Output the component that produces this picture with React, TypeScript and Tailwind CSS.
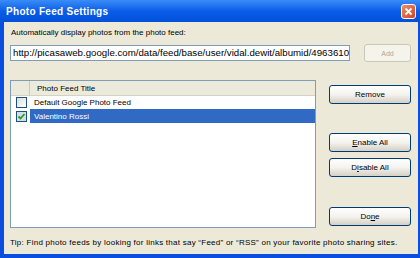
import React from "react";

const font = { fontFamily: '"Liberation Sans", Arial, sans-serif' };

function XpButton({ children }: { children: React.ReactNode }) {
  return (
    <div className="h-[19px] w-[82px] flex items-center justify-center rounded-[3px] border border-[#003c74] bg-gradient-to-b from-[#ffffff] via-[#f4f3ee] to-[#d6d0c5] text-black text-[8px] leading-none">
      {children}
    </div>
  );
}

function Check({ checked, selected }: { checked?: boolean; selected?: boolean }) {
  return (
    <div
      className={
        "w-[11px] h-[11px] border border-[#1c5180] flex items-center justify-center " +
        (selected ? "bg-[#d4dde8]" : "bg-gradient-to-br from-[#dcdcd7] to-[#ffffff]")
      }
    >
      {checked && (
        <svg width="9" height="9" viewBox="0 0 9 9">
          <path d="M1.5 4.5 L3.5 6.5 L7.5 2" stroke="#21a121" strokeWidth="1.8" fill="none" />
        </svg>
      )}
    </div>
  );
}

export default function App() {
  return (
    <div className="w-[420px] h-[258px] flex flex-col bg-[#0a4ee0] overflow-hidden" style={font}>
      {/* title bar */}
      <div className="h-[22px] flex items-center justify-between pl-[6px] pr-[4px] bg-gradient-to-b from-[#3a8cf7] via-[#0a5de8] to-[#0350d8]">
        <span className="text-white font-bold text-[10px] tracking-[0.3px]">Photo Feed Settings</span>
        <div className="w-[15px] h-[15px] mt-[1px] rounded-[3px] border border-white bg-gradient-to-br from-[#f08b68] to-[#d2411b] flex items-center justify-center">
          <svg width="9" height="9" viewBox="0 0 9 9">
            <path d="M1.5 1.5 L7.5 7.5 M7.5 1.5 L1.5 7.5" stroke="white" strokeWidth="1.8" />
          </svg>
        </div>
      </div>

      {/* body */}
      <div className="flex-1 ml-[4px] mr-[2px] mb-[4px] bg-[#ece9d8] pl-[6px] pr-[7px] flex flex-col text-[8px] leading-[13px] text-black">
        <div className="mt-[4px] pl-[1px]">Automatically display photos from the photo feed:</div>

        <div className="mt-[5px] flex items-center">
          <div className="w-[340px] h-[16px] border border-[#7f9db9] bg-white overflow-hidden whitespace-nowrap text-[9.7px] leading-[14px] pl-[2px]">
            http://picasaweb.google.com/data/feed/base/user/vidal.dewit/albumid/496361025
          </div>
          <div className="ml-auto">
            <div className="w-[47px] h-[18px] flex items-center justify-center rounded-[3px] border border-[#c9c7ba] bg-[#f5f4ea] text-[#aca899] text-[7px]">
              Add
            </div>
          </div>
        </div>

        <div className="mt-[18px] flex">
          <div className="w-[306px] h-[148px] border border-[#7f9db9] bg-white flex flex-col">
            <div className="h-[15px] flex bg-[#ebeadb] border-b border-[#d6d2c2]">
              <div className="w-[19px] border-r border-[#cbc7b8]" />
              <div className="pl-[7px] flex items-center">Photo Feed Title</div>
            </div>
            <div className="h-[13px] flex items-center">
              <div className="w-[19px] pl-[5px]">
                <Check />
              </div>
              <div className="pl-[4px]">Default Google Photo Feed</div>
            </div>
            <div className="h-[14px] flex items-center">
              <div className="w-[19px] pl-[5px]">
                <Check checked selected />
              </div>
              <div className="flex-1 h-full bg-[#316ac5] text-white pl-[4px] flex items-center">Valentino Rossi</div>
            </div>
          </div>

          <div className="ml-auto pt-[5px] flex flex-col">
            <XpButton>Remove</XpButton>
            <div className="mt-[29px]">
              <XpButton>
                <span className="underline">E</span>nable All
              </XpButton>
            </div>
            <div className="mt-[6px]">
              <XpButton>
                D<span className="underline">i</span>sable All
              </XpButton>
            </div>
            <div className="mt-[30px]">
              <XpButton>
                Do<span className="underline">n</span>e
              </XpButton>
            </div>
          </div>
        </div>

        <div className="mt-[8px] whitespace-nowrap tracking-[0.25px]">
          Tip: Find photo feeds by looking for links that say “Feed” or “RSS” on your favorite photo sharing sites.
        </div>
      </div>
    </div>
  );
}
